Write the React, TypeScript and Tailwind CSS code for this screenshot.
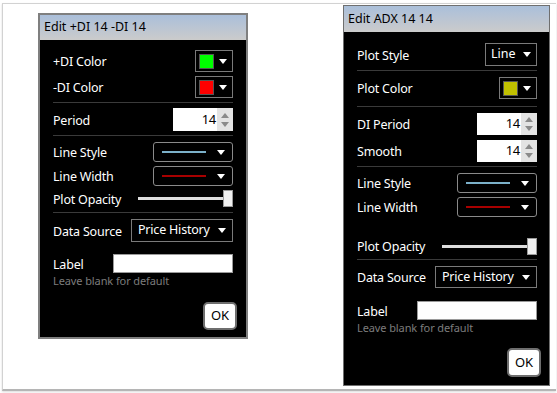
import React from "react";

const font = { fontFamily: '"Noto Sans", "Open Sans", sans-serif' };

function Arrow() {
  return (
    <svg width="8" height="5" viewBox="0 0 8 5" className="shrink-0">
      <path d="M0 0 H8 L4 5 Z" fill="#ffffff" />
    </svg>
  );
}

function ColorPick({ color }: { color: string }) {
  return (
    <div className="w-[38px] h-[22px] border border-[#7a7a7a] flex items-center pl-[3px] pr-[5px] justify-between">
      <div className="w-[15px] h-[15px] border border-[#555]" style={{ background: color }} />
      <Arrow />
    </div>
  );
}

function NumInput({ value, h }: { value: string; h: string }) {
  return (
    <div className={`flex ${h}`}>
      <div className="w-[44px] bg-white text-black text-[13px] tracking-[-0.3px] flex items-center justify-end pr-[1px]">{value}</div>
      <div className="w-[16px] bg-[#e3e3e3] flex flex-col items-center justify-center gap-[4px]">
        <svg width="8" height="5" viewBox="0 0 8 5"><path d="M0 5 H8 L4 0 Z" fill="#8a8a8a" /></svg>
        <svg width="8" height="5" viewBox="0 0 8 5"><path d="M0 0 H8 L4 5 Z" fill="#8a8a8a" /></svg>
      </div>
    </div>
  );
}

function LineSel({ color }: { color: string }) {
  return (
    <div className="w-[80px] h-[20px] border border-[#8a8a8a] rounded-[3px] flex items-center pl-[8px] pr-[7px] justify-between">
      <div className="w-[44px] h-[2px]" style={{ background: color }} />
      <Arrow />
    </div>
  );
}

function Slider({ w }: { w: string }) {
  return (
    <div className={`${w} flex items-center`}>
      <div className="flex-1 h-[3px] bg-[#dedede]" />
      <div className="w-[10px] h-[17px] bg-[#f0f0f0] border border-[#9a9a9a] -ml-[1px]" />
    </div>
  );
}

function Sep({ mt }: { mt: string }) {
  return <div className={`${mt} h-px bg-[#3a3a3a]`} />;
}

function Label({ children }: { children: React.ReactNode }) {
  return <span className="inline-block pt-[3px] text-[12.5px] tracking-[-0.2px] text-white leading-none">{children}</span>;
}

function DataSource({ w }: { w: string }) {
  return (
    <div className={`${w} h-full border border-[#7a7a7a] flex items-center justify-between pl-[6px] pr-[6px]`}>
      <span className="text-[12.5px] tracking-[-0.2px] text-white">Price History</span>
      <Arrow />
    </div>
  );
}

function OkBtn({ h }: { h: string }) {
  return (
    <div className={`w-[34px] ${h} bg-white border-2 border-[#6e6e6e] rounded-[5px] flex items-center justify-center text-[13px] text-black`}>OK</div>
  );
}

function TitleBar({ title, h }: { title: string; h: string }) {
  return (
    <div className={`${h} bg-gradient-to-b from-[#aabfda] to-[#cbcbcb] flex items-center pl-[4px] text-[12.5px] text-black`}>
      {title}
    </div>
  );
}

function LeftDialog() {
  return (
    <div className="w-[210px] h-[326px] border-2 border-[#7f7f7f] bg-black flex flex-col shrink-0">
      <TitleBar title="Edit +DI 14 -DI 14" h="h-[25px]" />
      <div className="flex flex-col pl-[13px] pr-[13px] pt-[10px]">
        <div className="h-[22px] flex items-center justify-between">
          <Label>+DI Color</Label>
          <ColorPick color="#00ff00" />
        </div>
        <div className="mt-[4px] h-[22px] flex items-center justify-between">
          <Label>-DI Color</Label>
          <ColorPick color="#ff0000" />
        </div>
        <Sep mt="mt-[4px]" />
        <div className="mt-[5px] h-[23px] flex items-center justify-between">
          <Label>Period</Label>
          <NumInput value="14" h="h-[23px]" />
        </div>
        <Sep mt="mt-[4px]" />
        <div className="mt-[6px] h-[20px] flex items-center justify-between">
          <Label>Line Style</Label>
          <LineSel color="#7bb0c9" />
        </div>
        <div className="mt-[4px] h-[20px] flex items-center justify-between">
          <Label>Line Width</Label>
          <LineSel color="#a80000" />
        </div>
        <div className="mt-[4px] h-[17px] flex items-center justify-between">
          <Label>Plot Opacity</Label>
          <Slider w="w-[95px]" />
        </div>
        <Sep mt="mt-[5px]" />
        <div className="mt-[6px] h-[23px] flex items-center justify-between">
          <Label>Data Source</Label>
          <DataSource w="w-[102px]" />
        </div>
        <div className="mt-[12px] h-[19px] flex items-center justify-between">
          <Label>Label</Label>
          <div className="w-[120px] h-full bg-white border border-[#9a9a9a]" />
        </div>
        <div className="mt-px h-[14px] flex items-center text-[11px] tracking-[-0.1px] text-[#7c7c7c]">Leave blank for default</div>
        <div className="mt-[14px] flex justify-end -mr-[4px]">
          <OkBtn h="h-[28px]" />
        </div>
      </div>
    </div>
  );
}

function RightDialog() {
  return (
    <div className="w-[207px] h-[381px] border border-[#6f6f6f] bg-black flex flex-col shrink-0">
      <TitleBar title="Edit ADX 14 14" h="h-[26px]" />
      <div className="flex flex-col pl-[13px] pr-[12px] pt-[11px]">
        <div className="h-[23px] flex items-center justify-between">
          <Label>Plot Style</Label>
          <div className="w-[52px] h-full border border-[#7a7a7a] flex items-center justify-between pl-[5px] pr-[5px]">
            <span className="text-[12.5px] text-white">Line</span>
            <Arrow />
          </div>
        </div>
        <Sep mt="mt-[4px]" />
        <div className="mt-[6px] h-[22px] flex items-center justify-between">
          <Label>Plot Color</Label>
          <ColorPick color="#c0c000" />
        </div>
        <Sep mt="mt-[7px]" />
        <div className="mt-[6px] h-[22px] flex items-center justify-between">
          <Label>DI Period</Label>
          <NumInput value="14" h="h-[22px]" />
        </div>
        <div className="mt-[5px] h-[22px] flex items-center justify-between">
          <Label>Smooth</Label>
          <NumInput value="14" h="h-[22px]" />
        </div>
        <Sep mt="mt-[4px]" />
        <div className="mt-[6px] h-[20px] flex items-center justify-between">
          <Label>Line Style</Label>
          <LineSel color="#7bb0c9" />
        </div>
        <div className="mt-[4px] h-[20px] flex items-center justify-between">
          <Label>Line Width</Label>
          <LineSel color="#a80000" />
        </div>
        <div className="mt-[20px] h-[18px] flex items-center justify-between">
          <Label>Plot Opacity</Label>
          <Slider w="w-[95px]" />
        </div>
        <Sep mt="mt-[4px]" />
        <div className="mt-[6px] h-[22px] flex items-center justify-between">
          <Label>Data Source</Label>
          <DataSource w="w-[102px]" />
        </div>
        <div className="mt-[13px] h-[19px] flex items-center justify-between">
          <Label>Label</Label>
          <div className="w-[120px] h-full bg-white border border-[#9a9a9a]" />
        </div>
        <div className="mt-px h-[14px] flex items-center text-[11px] tracking-[-0.1px] text-[#7c7c7c]">Leave blank for default</div>
        <div className="mt-[13px] flex justify-end -mr-[4px]">
          <OkBtn h="h-[29px]" />
        </div>
      </div>
    </div>
  );
}

export default function App() {
  return (
    <div className="w-[557px] h-[393px] bg-white overflow-hidden" style={font}>
      <div className="ml-[2px] mt-[3px] w-[554px] h-[388px] border-l border-t border-b-2 border-[#d2d2d2] border-b-[#b5b5b5] bg-white flex items-start shadow-[0_1px_2px_rgba(0,0,0,0.15)]">
        <div className="ml-[35px] mt-[9px]">
          <LeftDialog />
        </div>
        <div className="ml-[95px] mt-[1px]">
          <RightDialog />
        </div>
      </div>
    </div>
  );
}
